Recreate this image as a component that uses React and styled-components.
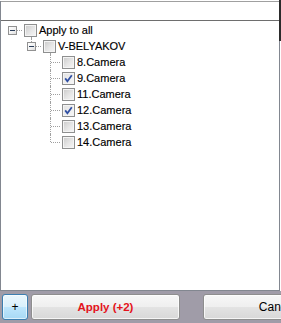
import React from 'react'
import styled, { createGlobalStyle, css } from 'styled-components'

const GlobalStyle = createGlobalStyle`
    html, body {
        margin: 0;
        padding: 0;
        background: #ffffff;
        overflow: hidden;
    }
`

const Window = styled.div`
    width: 281px;
    height: 323px;
    padding-top: 1px;
    box-sizing: border-box;
    display: flex;
    flex-direction: column;
    overflow: hidden;
    font-family: "Liberation Sans", Arial, sans-serif;
    background: #ffffff;
`
const Panel = styled.div`
    position: relative;
    width: 280px;
    height: 290px;
    box-sizing: border-box;
    border-left: 1px solid #828790;
    border-right: 1px solid #828790;
    border-bottom: 1px solid #828790;
    display: flex;
    flex-direction: column;
    &::after {
        content: '';
        position: absolute;
        right: -2px;
        top: -1px;
        width: 2px;
        height: 41px;
        background: #2b2b2b;
    }
`
const FilterBox = styled.div`
    height: 20px;
    box-sizing: border-box;
    border-top: 1px solid #a0a0a0;
    border-bottom: 1px solid #6e6e6e;
    flex: none;
`
const Tree = styled.div`
    flex: 1;
    padding: 1px 0 0 2px;
    background: #ffffff;
`
const Row = styled.div`
    display: flex;
    align-items: center;
    height: 16px;
`
const Cell = styled.span`
    position: relative;
    flex: none;
    width: 19px;
    height: 16px;
    display: flex;
    align-items: center;
    padding-left: 5px;
    box-sizing: border-box;
    &::before {
        content: '';
        position: absolute;
        left: 9px;
        border-left: 1px dotted #a0a0a0;
        ${(p) => p.$v === 'none' && css`display: none;`}
        ${(p) => p.$v === 'full' && css`top: 0; bottom: 0;`}
        ${(p) => p.$v === 'top' && css`top: 0; height: 8px;`}
    }
    &::after {
        content: '';
        position: absolute;
        left: 10px;
        right: 0;
        top: 8px;
        border-top: 1px dotted #a0a0a0;
        display: ${(p) => (p.$h ? 'block' : 'none')};
    }
`
const Expander = styled.span`
    position: relative;
    z-index: 1;
    width: 9px;
    height: 9px;
    box-sizing: border-box;
    border: 1px solid #919191;
    background: linear-gradient(135deg, #ffffff 0%, #f0f0f0 60%, #dcdcdc 100%);
    margin-top: 1px;
    &::after {
        content: '';
        position: absolute;
        left: 1px;
        top: 3px;
        width: 5px;
        height: 1px;
        background: #2a3d59;
    }
`
const Check = styled.span`
    position: relative;
    flex: none;
    width: 13px;
    height: 13px;
    box-sizing: border-box;
    margin-left: 2px;
    border: 1px solid #8e8f8f;
    box-shadow: inset 0 0 0 1px #f4f4f4;
    background: ${(p) =>
        p.$checked
            ? 'linear-gradient(135deg, #e2e2e2 0%, #f8f8f8 100%)'
            : 'linear-gradient(135deg, #c9c9c9 0%, #e6e6e6 55%, #f6f6f6 100%)'};
    display: flex;
    align-items: center;
    justify-content: center;
    &::after {
        content: '';
        position: absolute;
        left: 6px;
        top: calc(100% + 1px);
        height: 3px;
        border-left: 1px dotted #a0a0a0;
        display: ${(p) => (p.$drop ? 'block' : 'none')};
    }
`
const Label = styled.span`
    padding-left: 2px;
    font-size: 11px;
    color: #000000;
    white-space: nowrap;
    line-height: 16px;
    -webkit-text-stroke: 0.15px #000000;
`
const Footer = styled.div`
    flex: none;
    height: 32px;
    background: #a09ca8;
    display: flex;
    align-items: flex-start;
    padding: 3px 0 0 2px;
    box-sizing: border-box;
`
const Button = styled.button`
    flex: none;
    width: ${(p) => p.$w}px;
    height: 26px;
    margin-left: ${(p) => p.$gap || 0}px;
    padding: 0;
    box-sizing: border-box;
    border: 1px solid #8e8e8e;
    border-radius: 3px;
    background: linear-gradient(#f7f7f7 0%, #efefef 50%, #e3e3e3 51%, #d8d8d8 100%);
    box-shadow: inset 0 0 0 1px rgba(255, 255, 255, 0.75);
    font-family: "Liberation Sans", Arial, sans-serif;
    font-size: 12px;
    color: #000000;
    ${(p) =>
        p.$focus &&
        css`
            border-color: #3c7fb1;
            background: linear-gradient(#eaf6fd 0%, #d9f0fc 50%, #bee6fd 51%, #a7d9f5 100%);
            box-shadow: inset 0 0 0 1px rgba(255, 255, 255, 0.6);
        `}
    ${(p) =>
        p.$accent &&
        css`
            color: #e4131b;
            font-weight: bold;
            font-size: 11.5px;
        `}
`

const cameras = [
    { name: '8.Camera', checked: false },
    { name: '9.Camera', checked: true },
    { name: '11.Camera', checked: false },
    { name: '12.Camera', checked: true },
    { name: '13.Camera', checked: false },
    { name: '14.Camera', checked: false },
]

function CheckMark() {
    return (
        <svg width="9" height="9" viewBox="0 0 9 9">
            <path d="M1.2 4.4 L3.4 7.2 L7.8 1.2" fill="none" stroke="#2f4fa3" strokeWidth="1.8" />
        </svg>
    )
}

function TreeRow({ cells, expander, checked, drop, label }) {
    return (
        <Row>
            {cells.map((c, i) => (
                <Cell key={i} $v={c.v} $h={c.h}>
                    {expander && i === cells.length - 1 && <Expander />}
                </Cell>
            ))}
            <Check $checked={checked} $drop={drop}>
                {checked && <CheckMark />}
            </Check>
            <Label>{label}</Label>
        </Row>
    )
}

export default function App() {
    return (
        <Window>
            <GlobalStyle />
            <Panel>
                <FilterBox />
                <Tree>
                    <TreeRow cells={[{ v: 'none', h: true }]} expander drop label="Apply to all" />
                    <TreeRow
                        cells={[{ v: 'none' }, { v: 'top', h: true }]}
                        expander
                        drop
                        label="V-BELYAKOV"
                    />
                    {cameras.map((cam, i) => (
                        <TreeRow
                            key={cam.name}
                            cells={[
                                { v: 'none' },
                                { v: 'none' },
                                { v: i === cameras.length - 1 ? 'top' : 'full', h: true },
                            ]}
                            checked={cam.checked}
                            label={cam.name}
                        />
                    ))}
                </Tree>
            </Panel>
            <Footer>
                <Button $w={26} $focus>+</Button>
                <Button $w={149} $gap={3} $accent>Apply (+2)</Button>
                <Button $w={149} $gap={23}>Cancel</Button>
            </Footer>
        </Window>
    )
}
